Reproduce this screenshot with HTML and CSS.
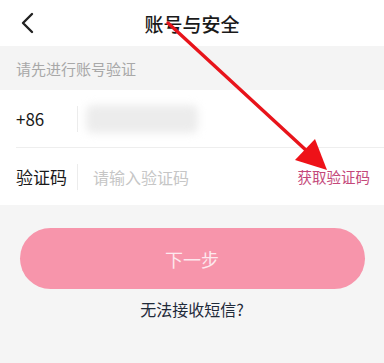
FILE: index.html
```html
<!DOCTYPE html>
<html lang="zh-CN">
<head>
    <meta charset="UTF-8">
    <meta name="viewport" content="width=device-width, initial-scale=1.0">
    <title>账号与安全</title>
    <link rel="stylesheet" href="styles.css">
</head>
<body>
    <div class="page">
        <header class="top-bar">
            <span class="back">
                <svg width="14" height="22" viewBox="0 0 14 22"><path d="M12 2 L3 11 L12 20" fill="none" stroke="#222" stroke-width="2.4" stroke-linecap="round" stroke-linejoin="round"/></svg>
            </span>
            <h1>账号与安全</h1>
        </header>

        <div class="hint">请先进行账号验证</div>

        <div class="form">
            <div class="row">
                <span class="label">+86</span>
                <span class="sep"></span>
                <span class="phone-blur"></span>
            </div>
            <div class="row">
                <span class="label">验证码</span>
                <span class="sep"></span>
                <span class="placeholder">请输入验证码</span>
                <span class="get-code">获取验证码</span>
            </div>
        </div>

        <div class="actions">
            <button class="next">下一步</button>
            <a class="no-sms">无法接收短信?</a>
        </div>

        <!-- annotation arrow from screenshot -->
        <svg class="arrow" width="384" height="363" viewBox="0 0 384 363">
            <line x1="168" y1="23" x2="308" y2="152" stroke="#e8141b" stroke-width="3.4" stroke-linecap="round"/>
            <polygon points="327,170 295,160 315,139" fill="#ee1218"/>
        </svg>
    </div>
</body>
</html>
```

FILE: styles.css
```css
body {
    margin: 0;
    font-family: "Noto Sans CJK SC", "Noto Sans", sans-serif;
    background-color: #f5f5f5;
}
.page {
    position: relative;
    width: 384px;
    height: 363px;
    overflow: hidden;
}
.top-bar {
    height: 46px;
    background: white;
    display: flex;
    align-items: center;
    justify-content: center;
    position: relative;
}
.back {
    position: absolute;
    left: 20px;
    top: 12px;
}
.top-bar h1 {
    margin: 0;
    font-size: 19px;
    font-weight: 500;
    color: #1a1a1a;
}
.hint {
    height: 44px;
    padding-left: 16px;
    display: flex;
    align-items: center;
    font-size: 15px;
    color: #a8a8a8;
    background-color: #f4f4f4;
}
.form {
    background: white;
    padding-left: 16px;
}
.row {
    height: 57px;
    display: flex;
    align-items: center;
    padding-right: 14px;
}
.row + .row {
    border-top: 1px solid #eeeeee;
}
.label {
    width: 61px;
    font-size: 17px;
    color: #1a1a1a;
}
.sep {
    width: 1px;
    height: 26px;
    background-color: #ececec;
    margin-right: 8px;
}
.phone-blur {
    width: 112px;
    height: 28px;
    background-color: #ececec;
    border-radius: 6px;
    filter: blur(4px);
}
.placeholder {
    flex: 1;
    margin-left: 7px;
    font-size: 16px;
    color: #c6c6c6;
}
.get-code {
    font-size: 14.5px;
    color: #c4487a;
}
.actions {
    display: flex;
    flex-direction: column;
    align-items: center;
    padding-top: 23px;
}
.next {
    width: 345px;
    height: 61px;
    border: none;
    border-radius: 31px;
    background-color: #f795ab;
    color: #fde8ee;
    font-family: inherit;
    font-size: 18px;
}
.no-sms {
    margin-top: 8px;
    font-size: 16px;
    color: #1f2a3a;
}
.arrow {
    position: absolute;
    left: 0;
    top: 0;
}
```
